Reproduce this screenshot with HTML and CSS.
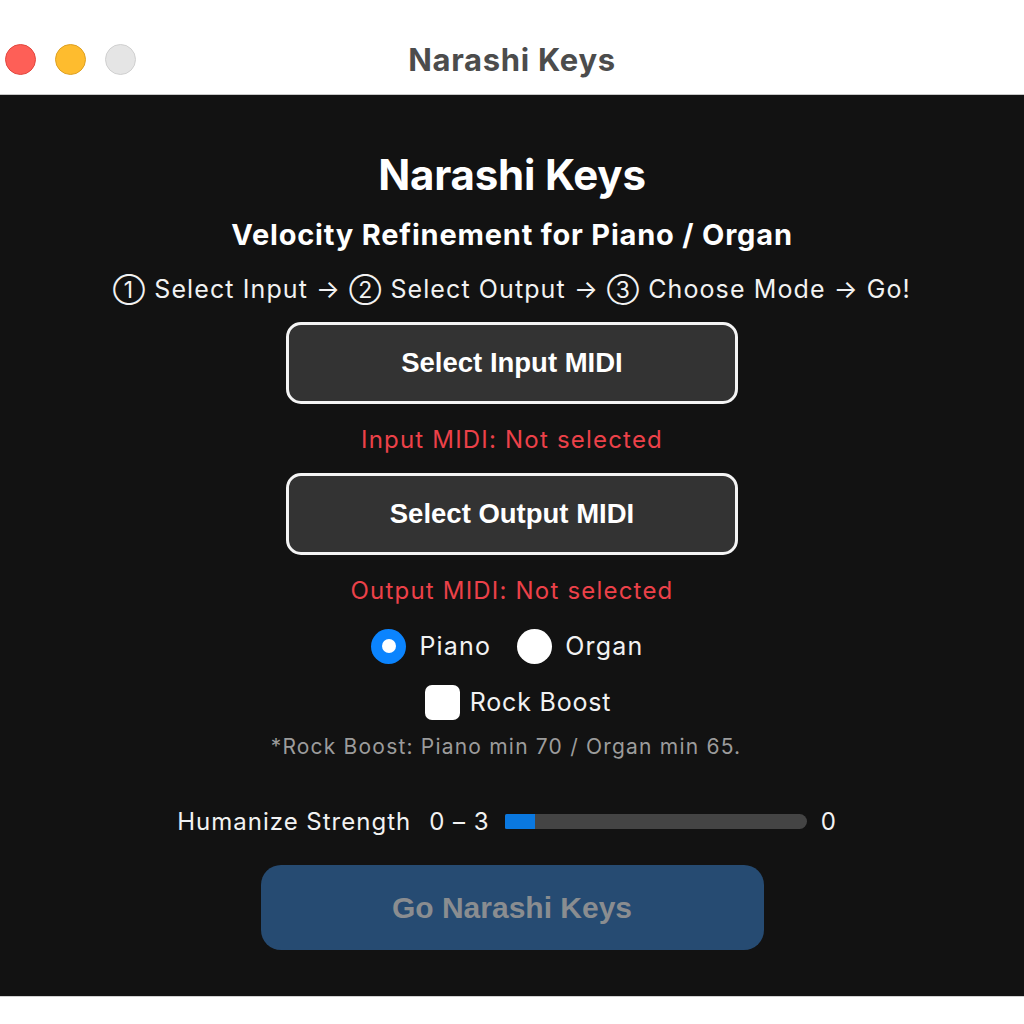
FILE: index.html
```html
<!DOCTYPE html>
<html>
<head>
<meta charset="utf-8">
<link rel="stylesheet" href="styles.css">
</head>
<body>
<div class="window">
  <header class="titlebar">
    <div class="lights">
      <span class="light red"></span>
      <span class="light yellow"></span>
      <span class="light gray"></span>
    </div>
    <div class="wintitle">Narashi Keys</div>
  </header>
  <main class="content">
    <h1 class="title">Narashi Keys</h1>
    <div class="subtitle">Velocity Refinement for Piano / Organ</div>
    <div class="steps"><span class="num">①</span> Select Input → <span class="num">②</span> Select Output → <span class="num">③</span> Choose Mode → Go!</div>
    <button class="pick pick-in">Select Input MIDI</button>
    <div class="status status-in">Input MIDI: Not selected</div>
    <button class="pick pick-out">Select Output MIDI</button>
    <div class="status status-out">Output MIDI: Not selected</div>
    <div class="radios">
      <label class="radio"><span class="dot on"></span><span>Piano</span></label>
      <label class="radio"><span class="dot"></span><span>Organ</span></label>
    </div>
    <label class="check"><span class="box"></span><span>Rock Boost</span></label>
    <div class="note">*Rock Boost: Piano min 70 / Organ min 65.</div>
    <div class="humanize">
      <span class="hlabel">Humanize Strength</span>
      <span class="hrange">0 – 3</span>
      <div class="track"><div class="fill" style="width:30px"></div></div>
      <span class="hval">0</span>
    </div>
    <button class="go">Go Narashi Keys</button>
  </main>
  <footer class="bottom"></footer>
</div>
</body>
</html>
```
FILE: styles.css
```css
* { box-sizing: border-box; }
html, body { margin: 0; padding: 0; background: #ffffff; }
body { font-family: Inter, "Noto Sans", sans-serif; }
.window { width: 1024px; height: 1024px; display: flex; flex-direction: column; }

.titlebar {
  height: 95px;
  background: #ffffff;
  border-bottom: 1px solid #c8c8c8;
  position: relative;
  display: flex;
  align-items: center;
  justify-content: center;
}
.lights {
  position: absolute;
  left: 5px;
  top: 44px;
  display: flex;
  gap: 19px;
}
.light { width: 31px; height: 31px; border-radius: 50%; display: block; }
.red { background: #fe5f57; border: 1px solid #e2483f; }
.yellow { background: #febc2e; border: 1px solid #dea123; }
.gray { background: #e5e5e5; border: 1px solid #d0d0d0; }
.wintitle {
  font-size: 31px;
  font-weight: 700;
  color: #4c4c4c;
  margin-top: 24px;
  letter-spacing: 0.7px;
}

.content {
  height: 901px;
  background: #121212;
  display: flex;
  flex-direction: column;
  align-items: center;
  padding-top: 56px;
  color: #ffffff;
}
.title {
  margin: 0;
  font-size: 42px;
  line-height: 48px;
  font-weight: 700;
  letter-spacing: -0.2px;
}
.subtitle {
  margin-top: 18px;
  font-size: 29px;
  line-height: 36px;
  font-weight: 700;
  letter-spacing: 0.8px;
}
.steps {
  margin-top: 20px;
  font-size: 25px;
  line-height: 32px;
  color: #f2f2f2;
  letter-spacing: 1.1px;
}
.num { font-size: 23px; }
.pick {
  width: 452px;
  height: 82px;
  background: #333333;
  border: 3px solid #f4f4f4;
  border-radius: 15px;
  color: #ffffff;
  font-family: "Liberation Sans", Arial, sans-serif;
  font-size: 27.5px;
  font-weight: 700;
  padding: 0;
}
.pick-in { margin-top: 16px; }
.pick-out { margin-top: 18px; }
.status {
  margin-top: 21px;
  font-size: 24px;
  line-height: 30px;
  color: #ec4149;
  letter-spacing: 1.2px;
}
.radios {
  margin-top: 22px;
  margin-right: 9px;
  height: 36px;
  display: flex;
  align-items: center;
  gap: 26px;
}
.radio, .check {
  display: flex;
  align-items: center;
  font-size: 25px;
  color: #f2f2f2;
  letter-spacing: 1.2px;
}
.radio { gap: 13px; }
.dot {
  width: 35px; height: 35px; border-radius: 50%;
  background: #ffffff;
  display: flex; align-items: center; justify-content: center;
}
.dot.on { background: #0b84fe; }
.dot.on::after {
  content: "";
  width: 14px; height: 14px; border-radius: 50%;
  background: #ffffff;
}
.check {
  margin-top: 20px;
  height: 36px;
  gap: 10px;
  margin-left: 12px;
  letter-spacing: 0.8px;
}
.box {
  width: 35px; height: 35px; border-radius: 7px;
  background: #ffffff;
}
.note {
  margin-top: 14px;
  margin-right: 12px;
  font-size: 21px;
  line-height: 26px;
  color: #9c9c9c;
  letter-spacing: 1.2px;
}
.humanize {
  margin-top: 46px;
  margin-right: 10px;
  height: 30px;
  display: flex;
  align-items: center;
  font-size: 24px;
  color: #f2f2f2;
  letter-spacing: 1px;
}
.hrange { margin-left: 18px; }
.track {
  margin-left: 15px;
  width: 302px;
  height: 15px;
  border-radius: 2px 8px 8px 2px;
  background: #444444;
  overflow: hidden;
}
.fill { height: 100%; background: #0a78e0; }
.hval { margin-left: 14px; }
.go {
  margin-top: 29px;
  width: 503px;
  height: 85px;
  border: none;
  border-radius: 20px;
  background: #264b72;
  color: #8a8d90;
  font-family: "Liberation Sans", Arial, sans-serif;
  font-size: 30px;
  font-weight: 700;
  padding: 0;
}
.bottom { flex: 1; background: #ffffff; border-top: 1px solid #d0d0d0; }
```
